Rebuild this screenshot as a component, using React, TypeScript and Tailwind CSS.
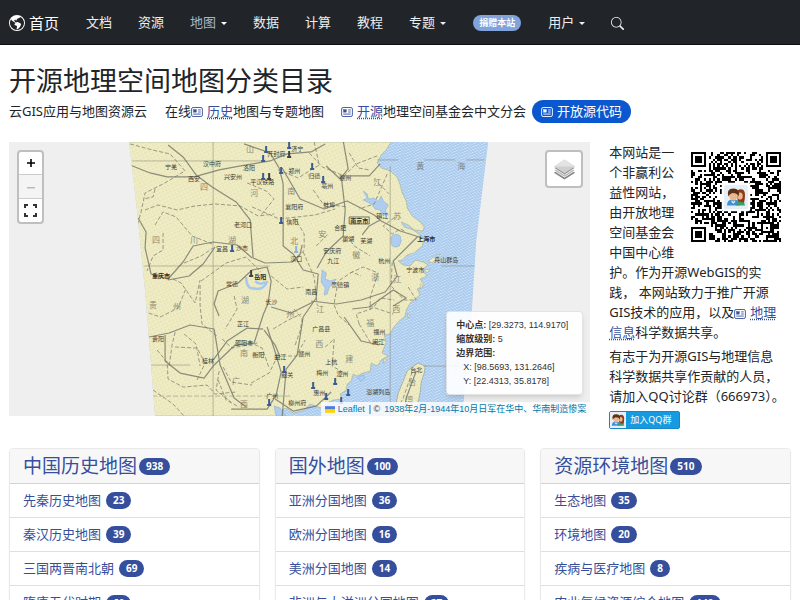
import React from 'react';
import { BsGlobeAmericas, BsSearch } from 'react-icons/bs';

interface Entry {
  name: string;
  count: number;
}

interface Category extends Entry {
  items: Entry[];
}

const categories: Category[] = [
  {
    name: '中国历史地图',
    count: 938,
    items: [
      { name: '先秦历史地图', count: 23 },
      { name: '秦汉历史地图', count: 39 },
      { name: '三国两晋南北朝', count: 69 },
      { name: '隋唐五代时期', count: 60 },
    ],
  },
  {
    name: '国外地图',
    count: 100,
    items: [
      { name: '亚洲分国地图', count: 36 },
      { name: '欧洲分国地图', count: 16 },
      { name: '美洲分国地图', count: 14 },
      { name: '非洲与大洋洲分国地图', count: 27 },
    ],
  },
  {
    name: '资源环境地图',
    count: 510,
    items: [
      { name: '生态地图', count: 35 },
      { name: '环境地图', count: 20 },
      { name: '疾病与医疗地图', count: 8 },
      { name: '农业气候资源综合地图', count: 140 },
    ],
  },
];

function Caret() {
  return <span className="border-x-[3px] border-t-[3px] border-x-transparent border-t-current" />;
}

function CardIcon() {
  return (
    <svg viewBox="0 0 16 16" className="inline-block h-3 w-3" fill="none" stroke="currentColor" aria-hidden="true">
      <rect x="0.8" y="2" width="14.4" height="12" rx="2" strokeWidth="1.2" />
      <rect x="3.4" y="4.8" width="3.6" height="3.4" fill="currentColor" strokeWidth="0.6" />
      <path d="M9.5 5.2h3.5M9.5 8h3.5M3 10.8h10" strokeWidth="1.2" />
    </svg>
  );
}

function TermLink({ children }: { children: React.ReactNode }) {
  return (
    <a href="#" className="text-[#364f9d]">
      <CardIcon />
      <span className="ml-[4px] underline decoration-dotted underline-offset-2">{children}</span>
    </a>
  );
}

function Navbar() {
  return (
    <nav className="flex h-[45px] items-center border-b border-[#0d0f10] bg-[#212529] px-[9px] pt-[2px] text-[13px] text-[#eceef0]">
      <a href="#" className="mr-[27px] flex items-center gap-[4px] text-[15px] text-white">
        <BsGlobeAmericas className="h-4 w-4" />
        首页
      </a>
      <ul className="flex items-center gap-[26px]">
        <li><a href="#">文档</a></li>
        <li><a href="#">资源</a></li>
        <li>
          <button className="flex items-center gap-[5px] text-[#a9b4c8]">
            地图<span className="flex text-white"><Caret /></span>
          </button>
        </li>
        <li><a href="#">数据</a></li>
        <li><a href="#">计算</a></li>
        <li><a href="#">教程</a></li>
        <li><button className="flex items-center gap-[5px]">专题<Caret /></button></li>
        <li>
          <a href="#" className="mx-px block rounded-full bg-[#7fa3da] px-[6px] text-[9px] leading-4 font-bold text-white">捐赠本站</a>
        </li>
        <li><button className="flex items-center gap-[5px]">用户<Caret /></button></li>
        <li><button aria-label="搜索" className="block"><BsSearch className="h-[13px] w-[13px]" /></button></li>
      </ul>
    </nav>
  );
}

const provinces: [string, number, number][] = [
  ['四', 152, 242], ['川', 190, 242], ['湖', 228, 242], ['四', 200, 189], ['河', 250, 195], ['南', 287, 193],
  ['山', 246, 151], ['江', 373, 184], ['苏', 393, 218], ['北', 290, 243], ['徽', 352, 257], ['安', 318, 236],
  ['贵', 149, 307], ['州', 173, 308], ['湖', 241, 302], ['江', 316, 311], ['西', 392, 311], ['福', 366, 325],
  ['建', 345, 361], ['南', 240, 355], ['湾', 405, 402], ['台', 408, 384], ['西', 315, 346], ['浙', 371, 279],
  ['江', 393, 281], ['州', 286, 316], ['广', 232, 383], ['西', 240, 406], ['黄', 416, 168], ['海', 457, 168],
];

const cities: [string, number, number][] = [
  ['宁羌', 165, 168], ['汉中府', 203, 165], ['西安', 188, 180], ['兴安州', 224, 178], ['洛阳', 243, 169], ['郑州', 288, 172],
  ['平汉铁路', 250, 183], ['开封府', 267, 155], ['徐州', 339, 179], ['归德', 308, 177], ['亳州', 321, 187], ['老河口', 234, 226],
  ['襄阳府', 285, 208], ['信阳', 286, 223], ['蚌埠', 323, 206], ['合肥', 334, 229], ['镇江', 376, 217], ['杭州', 378, 262],
  ['宁波市', 406, 271], ['巢湖', 342, 240], ['芜湖', 360, 242], ['汉口', 290, 260], ['安庆府', 323, 252], ['九江', 327, 262],
  ['宜昌', 216, 250], ['沙市', 236, 249], ['常德', 226, 285], ['长沙', 265, 303], ['南昌', 305, 293], ['景德镇', 331, 286],
  ['贵阳', 152, 340], ['芷江', 237, 325], ['邵阳市', 235, 344], ['衡阳', 252, 356], ['桂林', 202, 362], ['广昌县', 312, 330],
  ['赣州', 298, 355], ['曲江', 274, 358], ['梅州', 316, 374], ['惠州', 313, 394], ['广州', 266, 397],
  ['柳州府', 288, 404], ['福州', 373, 333], ['闽江', 372, 343], ['台北', 410, 371], ['上杭', 325, 363], ['漳州', 336, 375],
  ['澎湖列岛', 366, 393], ['舟山群岛', 434, 261], ['韶关', 281, 376], ['济宁', 291, 150],
];

const markers: [number, number, string][] = [
  [264, 145, '#3b5b94'], [261, 154, '#3b5b94'], [287, 141, '#3b5b94'], [279, 166, '#3b5b94'], [310, 162, '#3b5b94'],
  [321, 175, '#3b5b94'], [261, 172, '#3b5b94'], [267, 172, '#3e4240'], [279, 216, '#3b5b94'], [230, 244, '#3b5b94'],
  [294, 245, '#8fb2d8'], [249, 269, '#3e4240'], [282, 365, '#3b5b94'], [311, 381, '#3b5b94'], [333, 377, '#3b5b94'],
  [346, 388, '#3b5b94'], [324, 392, '#3b5b94'], [339, 396, '#3b5b94'], [267, 398, '#3b5b94'], [287, 150, '#3e4240'],
];

function HistoricMap() {
  return (
    <svg viewBox="9 141 581 274" preserveAspectRatio="xMidYMid slice" className="h-full w-full" role="img" aria-label="历史地图">
      <defs>
        <clipPath id="sheet"><path d="M129 141L137 210L145 290L155 415H462L471 320L476 240L488 141Z" /></clipPath>
        <pattern id="waves" width="4" height="3" patternUnits="userSpaceOnUse" patternTransform="rotate(8)">
          <rect width="4" height="3" fill="#a9caee" />
          <path d="M0 .5h2M2 2h2" stroke="#d2e5f7" />
        </pattern>
        <pattern id="paper" width="5" height="5" patternUnits="userSpaceOnUse" patternTransform="rotate(20)">
          <rect width="5" height="5" fill="#eeebc2" />
          <path d="M0 1h1M3 3h1M2 0h1" stroke="#dfdaab" />
          <path d="M1 4h1M4 1h1" stroke="#f6f4d4" />
        </pattern>
      </defs>
      <g clipPath="url(#sheet)">
        <rect x="125" y="141" width="370" height="274" fill="url(#waves)" />
        <path
          d="M120 141H391L386 149L381 154L377 162L381 167L390 170L397 176L400 184L402 192L406 200L407 207L412 215L420 221L424 226L423 230L414 229L408 224L401 221L404 226L413 229L420 234L424 238L422 245L414 252L407 254L402 259L398 260L403 264L410 265L415 259L423 261L428 264L421 269L427 275L420 278L424 285L417 288L420 294L415 298L410 302L406 309L405 315L398 321L393 327L390 333L384 334L386 341L382 352L388 355L381 359L377 365L371 362L370 370L363 372L357 375L353 373L351 380L347 383L346 389L340 393L342 398L333 399L327 402L321 407L310 403L304 409L293 412L287 407L283 408L278 415H120Z"
          fill="url(#paper)" stroke="#a8b49a" strokeWidth="0.7"
        />
        <path d="M393 415L396 402L398 392L403 380L407 370L412 366L418 362L425 365L424 372L421 381L420 391L415 415Z" fill="url(#paper)" stroke="#98a490" strokeWidth="0.7" />
        <g fill="#efeac0" stroke="#98a490" strokeWidth="0.5">
          <path d="M428 260l5-4 3 2-4 4zM424 269l6-1-3 4zM420 283l3 2-3 3zM407 313l3 1-2 3zM436 254l4-1-2 3zM384 357l3 2-4 3z" />
        </g>
        <g fill="#aecdf0" stroke="#8fb0d2" strokeWidth="0.6">
          <path d="M363 190l4 3 1 5 6-1 4 4 3-6 2 5 5 4-3 6 3 4-5 0-3-5-5-1-4-5-8-4 4-2z" />
          <path d="M391 236q4-5 9-1l1 5-2 5q-7 3-8-3z" />
          <path d="M322 269l4 3-1 6 5 2 6-2-4 6-3 2-2 7-3 1 1-7-4-6z" />
          <path d="M274 405l6 2 6 8h-10z" />
          <path d="M357 377l6-3 2 3-4 3z" />
        </g>
        <g fill="none" stroke="#a5c8ee" strokeWidth="2.5">
          <path d="M246 276q0 8 4 11l8 1q7-1 9-8M255 280q5 5 10 1" />
        </g>

        {/* graticule */}
        <g fill="none" stroke="#77796c" strokeWidth="0.7" opacity="0.65">
          <path d="M132 160H265M377 159H398M424 159H455M466 159H484M144 265H270M441 265H475M151 364H190M423 365H468M213 141V415M390 165V415" />
          <path d="M152 395H290" strokeDasharray="5 2" />
        </g>

        {/* railways and roads */}
        <g fill="none" stroke="#6b6d62" strokeWidth="1.2" strokeLinejoin="round" opacity="0.75">
          <path d="M130 164l20 8 17 4 27 0 25-7 27-5 24-4 17-7 24-2 14-8" />
          <path d="M138 217l8 14-1 16 6 26 17 5 15-17 10-16 20-4 24 3 15 13M168 279l21-4 14-12 12-17" />
          <path d="M168 144l15 12 13 18 16 12 24 15 14 18 3 38 12 5 27-1 8-8 2-9" />
          <path d="M244 143l26 9 9 15 4 16 0 62 10 8 10 16 15 4-2 24-13 19-6 38-11 14-4 48" />
          <path d="M219 315l-5-12 4-13 20-8 14-13 15-3 4 14-3 22-5 12-9 28-19 2-22 21-9 12-24-5-15-12v-26" />
          <path d="M282 167l18 31 24 10 23-8 27 14 7 6 19 10 22 7M341 175l4 34-2 26-17 16-9 16" />
          <path d="M343 140l5 28-8 10-14-13M341 175l28 0 11-12M380 219l-11 6-7 9M418 235l-25 25 4 15-12 16-24 8-25 4-25-3" />
          <path d="M149 336l20-4 21-8 24 4 6 36 14 33 12 9M267 326l8 25 6 20-5 23-9 14-36 0M275 398l18 12 23-5 15-14" />
          <path d="M393 305l13-8-13-8-24 17-17 2M344 316l17 24 18 4M403 415l3-18 10-27" />
          <path d="M271 306l20 6 24-12M264 329l11 15 5 12M213 359l14-19 20-13 16 1" />
        </g>

        {/* rivers and borders */}
        <g fill="none" stroke="#777968" strokeWidth="0.9" strokeDasharray="4 2" strokeLinejoin="round" opacity="0.8">
          <path d="M130 143l22 6 18 4 15 17-22 13-18 9-4 19-4 14M155 188l-2 8-10 2" />
          <path d="M145 209l13-5 19 5 18-4 20-2 25 2 18 10 16-2M155 224l8-13 13 5 16 19 20 8" />
          <path d="M163 232v17l-10 6-6 15M173 278l8 4 14 20 5-23M200 284v21l2 18 16 13M184 262l17-7 12-8" />
          <path d="M201 280l25-18 20-6 15 15M143 310l17 6 18-9 8-20M234 295l3 13-12 20" />
          <path d="M157 349l10 12 1 17 15 8 24-2 8 9 20-2M175 346l22 1 8 15-8 17M153 389l20 14 12 13M218 379l8 20 13 7M222 338l10 9 25-5" />
          <path d="M175 331l-3 13-3 21M184 333l12 10 4 22M223 366l8 15 21 3M219 370l-3 19 15 12" />
          <path d="M314 141l5 23-21 13-20-8M247 182l19 8 8 8-13 16M252 206l27 12 36-4 20-6M294 216l10 17 0 16-9 11" />
          <path d="M316 245l12-12M347 235l7 10 16 10M350 272l13-6 15 6-8 24 0 13M334 302l4-22 14-9 9 4M369 305l24 8M334 304l4 10 11 10" />
          <path d="M359 323l-3-10 17-6 7-10 14 2M359 323l12 20 14-4M303 251l11 25 3 28M273 328l15-9 13-6M271 275l16 13 16-2" />
          <path d="M295 344l5-14 2-12-9-11M282 355l14 0 9-16M325 346l9-8-2 27 14 8M251 382l18-10 8-16M249 341l13 6 7 20" />
          <path d="M377 155l-21 8-12 12-22-9-13-14M349 152l9 15 11 2M387 173l-13 30-15 5M374 178l15 15M313 189l10 14 24 3" />
          <path d="M404 230l-4-2-8 5-9-8 12-9M408 286l8 13-12 0-13-14 1-25M412 371l-9 26-8 15" />
        </g>

        <g fill="#5d5f54" fontFamily="'Noto Sans CJK SC', sans-serif" fontSize="8" opacity="0.7">
          {provinces.map(([label, x, y], i) => <text key={i} x={x} y={y}>{label}</text>)}
        </g>
        <g fill="#3a3c34" fontFamily="'Noto Sans CJK SC', sans-serif" fontSize="6">
          {cities.map(([label, x, y], i) => <text key={i} x={x} y={y}>{label}</text>)}
        </g>
        <g fill="#2b2d27" fontFamily="'Noto Sans CJK SC', sans-serif" fontSize="6" fontWeight="700">
          <text x="152" y="277">重庆市</text>
          <text x="350" y="222">南京市</text>
          <text x="417" y="240">上海市</text>
          <text x="254" y="278">岳阳</text>
        </g>
        <path d="M349 216h20v7h-20z" fill="none" stroke="#44463c" strokeWidth="0.7" />
        {markers.map(([x, y, fill], i) => (
          <path key={i} d={`M${x + 1} ${y}h2v5h1v2h-4v-2h1z`} fill={fill} />
        ))}
      </g>
    </svg>
  );
}

function MapPanel() {
  return (
    <div className="relative h-[274px] overflow-hidden bg-[#efefef] font-['Liberation_Sans','Noto_Sans_CJK_SC',sans-serif]">
      <HistoricMap />

      {/* Zoom and fullscreen */}
      <div className="absolute top-2 left-2 w-[27px] divide-y divide-[#ccc] overflow-hidden rounded border-2 border-black/20 bg-white bg-clip-padding text-black">
        <button aria-label="放大" className="flex h-[23px] w-full items-center justify-center">
          <svg viewBox="0 0 10 10" className="h-2 w-2" stroke="currentColor" strokeWidth="2"><path d="M5 0v10M0 5h10" /></svg>
        </button>
        <button aria-label="缩小" disabled className="flex h-[24px] w-full items-center justify-center bg-[#f4f4f4] text-[#bbb]">
          <svg viewBox="0 0 10 10" className="h-2 w-2" stroke="currentColor" strokeWidth="2"><path d="M0 6h10" /></svg>
        </button>
        <button aria-label="全屏" className="flex h-[23px] w-full items-center justify-center">
          <svg viewBox="0 0 13 13" className="h-[13px] w-[13px]" fill="none" stroke="#333" strokeWidth="2">
            <path d="M1 4V1h3M9 1h3v3M12 9v3H9M4 12H1V9" />
          </svg>
        </button>
      </div>

      <button aria-label="图层" className="absolute top-2 right-[7px] flex h-[38px] w-[38px] items-center justify-center rounded border-2 border-black/20 bg-white bg-clip-padding">
        <svg viewBox="0 0 26 26" className="h-[25px] w-[25px]">
          <path d="M13 9.5L24 16.5 13 23.5 2 16.5z" fill="#848484" />
          <path d="M13 7L24 14 13 21 2 14z" fill="#b8b8b8" stroke="#fff" strokeWidth="0.8" />
          <path d="M13 4.5L24 11.5 13 18.5 2 11.5z" fill="#8c8c8c" stroke="#fff" strokeWidth="0.8" />
          <path d="M13 2.5L24 10 13 17 2 10z" fill="#cfcfcf" />
          <path d="M13 2.5L24 10H2z" fill="#e3e3e3" />
        </svg>
      </button>

      <div className="absolute right-0 bottom-0 flex flex-col items-end">
        <div className="mr-[7px] mb-[7px] w-[137px] rounded border border-black/10 bg-white/90 px-[9px] py-[6px] text-[9px] leading-[14px] text-[#333] shadow-md">
          <p><b>中心点:</b> [29.3273, 114.9170]</p>
          <p><b>缩放级别:</b> 5</p>
          <p><b>边界范围:</b></p>
          <p className="pl-[7px]">X: [98.5693, 131.2646]</p>
          <p className="pl-[7px]">Y: [22.4313, 35.8178]</p>
        </div>
        <div className="flex items-center gap-[4px] bg-white/80 px-1 text-[9px] leading-[14px] text-[#333]">
          <a href="#" className="flex items-center gap-[3px] text-[#0078a8]">
            <svg viewBox="0 0 12 8" className="h-[7px] w-[10px]"><path fill="#4c7be1" d="M0 0h12v4H0z" /><path fill="#ffd500" d="M0 4h12v4H0z" /></svg>
            Leaflet
          </a>
          <span>| ©</span>
          <a href="#" className="text-[#0078a8]">1938年2月-1944年10月日军在华中、华南制造惨案</a>
        </div>
      </div>
    </div>
  );
}

const QR_SIZE = 41;

function finderAt(x: number, y: number, ox: number, oy: number, size: number): boolean | null {
  const dx = x - ox;
  const dy = y - oy;
  if (dx < -1 || dy < -1 || dx > size || dy > size) return null;
  const c = (size - 1) / 2;
  const ring = Math.max(Math.abs(dx - c), Math.abs(dy - c));
  if (ring > c) return false;
  return ring !== c - 1;
}

function isDark(x: number, y: number) {
  for (const [ox, oy] of [[0, 0], [QR_SIZE - 7, 0], [0, QR_SIZE - 7]]) {
    const hit = finderAt(x, y, ox, oy, 7);
    if (hit !== null) return hit;
  }
  if (x >= 32 && x <= 36 && y >= 32 && y <= 36) {
    return Math.max(Math.abs(x - 34), Math.abs(y - 34)) !== 1;
  }
  if (x === 6 || y === 6) return (x + y) % 2 === 0;
  let h = (x * 374761393 + y * 668265263) | 0;
  h = Math.imul(h ^ (h >>> 13), 1274126177);
  return ((h ^ (h >>> 16)) & 255) < 132;
}

function Avatars() {
  return (
    <g>
      <path d="M1 20q0-7 7-7t7 7z" fill="#3f8fd6" />
      <path d="M11 20q1-6 5-6t5 6z" fill="#3c9c6a" />
      <path d="M12 8q0-6 4-6 5 0 5 6 0 6-1 9l-7-2z" fill="#8c3a1c" />
      <ellipse cx="15.5" cy="9.5" rx="3" ry="4" fill="#e9b88e" />
      <ellipse cx="8" cy="9" rx="4.5" ry="5.5" fill="#e9b88e" />
      <path d="M2.500 10Q0 1 8 1q8 0 6 9Q13 6 7 6 4 7 2.500 10z" fill="#5b3118" />
      <path d="M6 14l2 2 2-2v2l-2 2-2-2z" fill="#eaf3fb" />
    </g>
  );
}

function QrCode() {
  let d = '';
  for (let y = 0; y < QR_SIZE; y++) {
    for (let x = 0; x < QR_SIZE; x++) {
      if (isDark(x, y)) d += `M${x} ${y}h1v1h-1z`;
    }
  }
  return (
    <svg viewBox="0 0 41 41" className="h-[90px] w-[90px]" role="img" aria-label="QQ群二维码">
      <path d={d} fill="#000" shapeRendering="crispEdges" />
      <rect x="14" y="14" width="13" height="13" rx="1" fill="#fff" />
      <rect x="15" y="15" width="11" height="11" rx="1" fill="#e6eff5" />
      <svg x="16" y="16" width="9" height="9" viewBox="0 0 22 21"><Avatars /></svg>
    </svg>
  );
}

function Sidebar() {
  return (
    <aside className="pr-[5px] leading-5">
      <div className="float-right mt-[10px] mr-[5px] mb-[10px] ml-[7px]">
        <QrCode />
      </div>
      <p>
        本网站是一个非赢利公益性网站，由开放地理空间基金会中国中心维护。作为开源WebGIS的实践， 本网站致力于推广开源GIS技术的应用，以及<TermLink>地理信息</TermLink>科学数据共享。
      </p>
      <p className="mt-1">有志于为开源GIS与地理信息科学数据共享作贡献的人员，请加入QQ讨论群（666973）。</p>
      <a href="#" className="mt-[5px] flex h-[18px] w-[71px] items-center gap-[4px] rounded-xs border border-[#1a86c8] bg-[#169ae0] text-[9px] text-white">
        <svg viewBox="-2 -2 26 25" className="h-4 w-4 bg-[#e6eff5]"><Avatars /></svg>
        加入QQ群
      </a>
    </aside>
  );
}

function CountBadge({ count }: { count: number }) {
  return (
    <span className="rounded-full bg-[#364f9d] px-[7px] text-[10px] leading-[17px] font-bold text-white">{count}</span>
  );
}

function CategoryCard({ category }: { category: Category }) {
  return (
    <section className="overflow-hidden rounded border border-[#e9e9e9] text-[#364f9d] shadow-xs">
      <h2 className="flex h-[35px] items-center gap-[2px] border-b border-[#d3d3d3] bg-[#f7f7f7] px-[13px] text-[19px]">
        <a href="#">{category.name}</a>
        <CountBadge count={category.count} />
      </h2>
      <ul className="divide-y divide-[#dfdfdf]">
        {category.items.map((item) => (
          <li key={item.name} className="flex h-[34px] items-center gap-[5px] px-[13px]">
            <a href="#">{item.name}</a>
            <CountBadge count={item.count} />
          </li>
        ))}
      </ul>
    </section>
  );
}

export default function App() {
  return (
    <div className="bg-white font-['Noto_Sans','Noto_Sans_CJK_SC',sans-serif] text-[13px] text-[#212529]" lang="zh-CN">
      <Navbar />
      <main className="px-[9px] pt-[18px]">
        <h1 className="text-[27px] leading-9">开源地理空间地图分类目录</h1>
        <div className="mt-[1px] flex items-center whitespace-nowrap">
          <span className="mr-[18px]">云GIS应用与地图资源云</span>
          <span className="mr-[17px]">在线<TermLink>历史</TermLink>地图与专题地图</span>
          <span className="mr-[6px]"><TermLink>开源</TermLink>地理空间基金会中文分会</span>
          <a href="#" className="flex h-[23px] items-center gap-[4px] rounded-full bg-[#0b57d0] px-[9px] text-white">
            <CardIcon />
            开放源代码
          </a>
        </div>

        <div className="mt-[19px] grid grid-cols-[3.2fr_1fr] gap-[19px]">
          <MapPanel />
          <Sidebar />
        </div>

        <div className="mt-[19px] grid grid-cols-3 gap-[15px]">
          {categories.map((category) => (
            <CategoryCard key={category.name} category={category} />
          ))}
        </div>
      </main>
    </div>
  );
}
